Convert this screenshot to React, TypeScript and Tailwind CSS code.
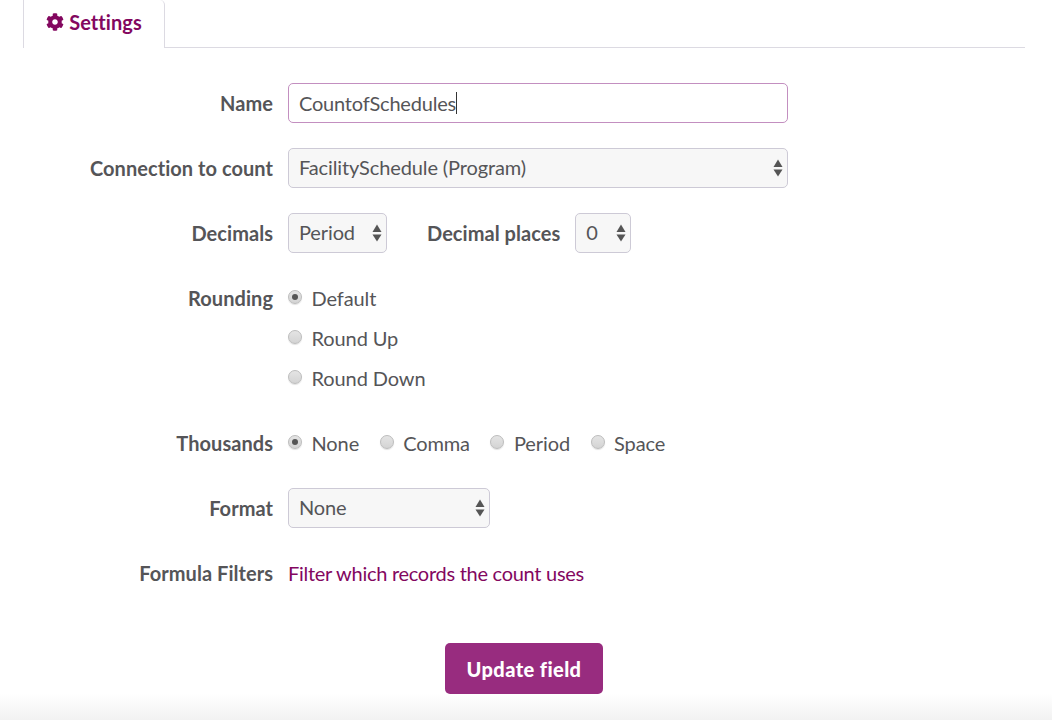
import React from 'react';

const Arrows = () => (
  <svg width="10" height="18" viewBox="0 0 10 18" className="absolute right-[5px] top-1/2 -translate-y-1/2 pointer-events-none fill-[#555]">
    <path d="M5 0.5 L9.5 8 H0.5 Z" />
    <path d="M0.5 10.5 H9.5 L5 17.5 Z" />
  </svg>
);

const Select: React.FC<{ value: string; className: string }> = ({ value, className }) => (
  <div className={`relative h-10 ${className}`}>
    <select
      defaultValue={value}
      className="w-full h-full appearance-none rounded-[5px] border border-[#cdcad6] bg-[#f7f7f7] pl-[10px] pb-[2px] text-[#555558] outline-none tracking-[-0.12px]"
    >
      <option>{value}</option>
    </select>
    <Arrows />
  </div>
);

const Radio: React.FC<{ label: string; checked?: boolean }> = ({ label, checked }) => (
  <label className="flex items-center gap-[9.5px] tracking-[-0.1px]">
    <span className="w-[14px] h-[14px] -mt-[3px] rounded-full border border-[#bcbcbc] bg-gradient-to-b from-[#e4e4e4] to-[#d4d4d4] shadow-[0_1px_1px_rgba(0,0,0,0.12)] flex items-center justify-center">
      {checked && <span className="w-[6px] h-[6px] rounded-full bg-[#555]" />}
    </span>
    <span>{label}</span>
  </label>
);

const Row: React.FC<{ label: string; children: React.ReactNode }> = ({ label, children }) => (
  <div className="flex items-center h-10 mb-[25px]">
    <label className="w-[273px] shrink-0 text-right font-bold tracking-[0.05px]">{label}</label>
    <div className="ml-[15px] flex items-center flex-1">{children}</div>
  </div>
);

export default function App() {
  return (
    <div
      className="relative h-[720px] w-[1052px] overflow-hidden bg-white text-[20px] text-[#555558]"
      style={{ fontFamily: 'Lato, sans-serif' }}
    >
      {/* Tabs */}
      <div className="mx-[23px] w-[1002px] h-[48px] border-b border-[#dcdae2] flex">
        <div className="w-[142px] h-[48px] -mb-px pb-[4px] bg-white border-x border-[#dcdae2] rounded-tr-[5px] flex items-center justify-center gap-[5px] text-[#83075f] font-bold tracking-[0.05px]">
          <svg width="18" height="18" viewBox="0 0 512 512" className="fill-[#83075f]">
            <path d="M487.4 315.7l-42.6-24.6c4.3-23.2 4.3-47 0-70.2l42.6-24.6c4.9-2.8 7.1-8.6 5.5-14-11.1-35.6-30-67.8-54.7-94.6-3.8-4.1-10-5.1-14.8-2.3L380.8 110c-17.9-15.4-38.5-27.3-60.8-35.1V25.8c0-5.6-3.9-10.5-9.4-11.7-36.7-8.2-74.3-7.8-109.2 0-5.5 1.2-9.4 6.1-9.4 11.7V75c-22.2 7.9-42.8 19.8-60.8 35.1L88.7 85.5c-4.9-2.8-11-1.9-14.8 2.3-24.7 26.7-43.6 58.9-54.7 94.6-1.7 5.4.6 11.2 5.5 14L67.3 221c-4.3 23.2-4.3 47 0 70.2l-42.6 24.6c-4.9 2.8-7.1 8.6-5.5 14 11.1 35.6 30 67.8 54.7 94.6 3.8 4.1 10 5.1 14.8 2.3l42.6-24.6c17.9 15.4 38.5 27.3 60.8 35.1v49.2c0 5.6 3.9 10.5 9.4 11.7 36.7 8.2 74.3 7.8 109.2 0 5.5-1.2 9.4-6.1 9.4-11.7v-49.2c22.2-7.9 42.8-19.8 60.8-35.1l42.6 24.6c4.9 2.8 11 1.9 14.8-2.3 24.7-26.7 43.6-58.9 54.7-94.6 1.5-5.5-.7-11.3-5.6-14.1zM256 336c-44.1 0-80-35.9-80-80s35.9-80 80-80 80 35.9 80 80-35.9 80-80 80z" />
          </svg>
          <span>Settings</span>
        </div>
      </div>

      {/* Form */}
      <form className="pt-[35px]">
        <Row label="Name">
          <div className="w-[500px] h-10 flex items-center rounded-[5px] border border-[#c38fc0] bg-white pl-[10px] text-[#555558] tracking-[-0.2px]">
            CountofSchedules
            <span className="w-px h-[22px] bg-[#333]" />
          </div>
        </Row>
        <Row label="Connection to count">
          <Select value="FacilitySchedule (Program)" className="w-[500px]" />
        </Row>
        <Row label="Decimals">
          <Select value="Period" className="w-[99px]" />
          <label className="ml-[40px] mr-[15px] font-bold tracking-[0.05px]">Decimal places</label>
          <Select value="0" className="w-[56px]" />
        </Row>
        <div className="flex mb-[25px]">
          <label className="w-[273px] shrink-0 h-10 leading-10 text-right font-bold tracking-[0.05px]">Rounding</label>
          <div className="ml-[15px] flex flex-col">
            <div className="h-10 flex items-center"><Radio label="Default" checked /></div>
            <div className="h-10 flex items-center"><Radio label="Round Up" /></div>
            <div className="h-10 flex items-center"><Radio label="Round Down" /></div>
          </div>
        </div>
        <Row label="Thousands">
          <div className="flex items-center gap-[20.5px]">
            <Radio label="None" checked />
            <Radio label="Comma" />
            <Radio label="Period" />
            <Radio label="Space" />
          </div>
        </Row>
        <Row label="Format">
          <Select value="None" className="w-[202px]" />
        </Row>
        <Row label="Formula Filters">
          <a className="text-[#83075f] tracking-[-0.28px]">Filter which records the count uses</a>
        </Row>
        <div className="flex justify-center mt-[50px] pr-[4px]">
          <button
            type="button"
            className="w-[158px] h-[51px] rounded-[5px] bg-[#982c7f] text-white font-black tracking-[0.4px]"
          >
            Update field
          </button>
        </div>
      </form>

      {/* bottom fade */}
      <div className="absolute inset-x-0 bottom-0 h-[26px] bg-gradient-to-b from-white to-[#f2f2f2] pointer-events-none" />
    </div>
  );
}
